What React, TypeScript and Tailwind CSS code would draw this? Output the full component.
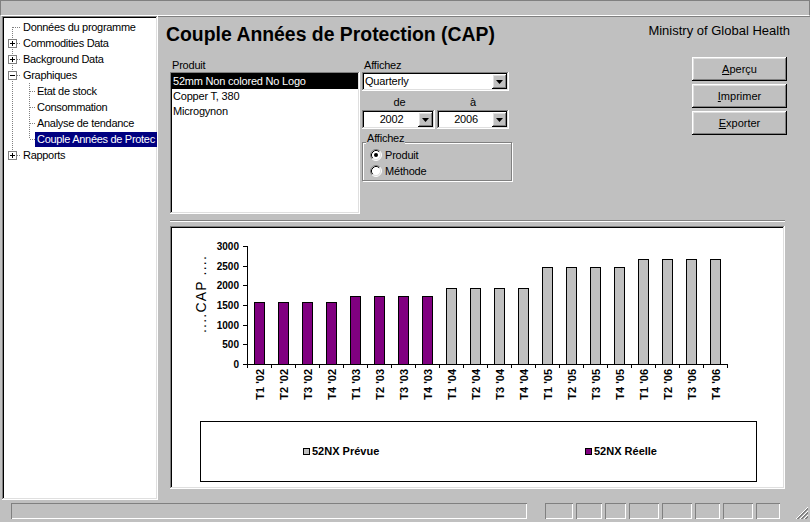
import React from 'react';

const sunken =
  'shadow-[inset_-1px_-1px_#ffffff,inset_1px_1px_#808080,inset_-2px_-2px_#dfdfdf,inset_2px_2px_#000000]';
const raised =
  'shadow-[inset_-1px_-1px_#000000,inset_1px_1px_#ffffff,inset_-2px_-2px_#808080,inset_2px_2px_#dfdfdf]';
const thinSunken = 'shadow-[inset_1px_1px_#808080,inset_-1px_-1px_#ffffff]';

type TreeItem = {
  label: string;
  level: 0 | 1;
  box?: '+' | '-';
  first?: boolean;
  last?: boolean;
  lastChild?: boolean;
  selected?: boolean;
};

const tree: TreeItem[] = [
  { label: 'Données du programme', level: 0, first: true },
  { label: 'Commodities Data', level: 0, box: '+' },
  { label: 'Background Data', level: 0, box: '+' },
  { label: 'Graphiques', level: 0, box: '-' },
  { label: 'Etat de stock', level: 1 },
  { label: 'Consommation', level: 1 },
  { label: 'Analyse de tendance', level: 1 },
  { label: 'Couple Années de Protec', level: 1, lastChild: true, selected: true },
  { label: 'Rapports', level: 0, box: '+', last: true },
];

const dot = { stroke: '#808080', strokeWidth: 1, strokeDasharray: '1 1' };

const Connector = ({ item }: { item: TreeItem }) => {
  if (item.level === 0) {
    return (
      <svg width={17} height={16} className="shrink-0">
        <line x1={8.5} y1={item.first ? 8 : 0} x2={8.5} y2={item.last ? 8 : 16} {...dot} />
        <line x1={9} y1={8.5} x2={17} y2={8.5} {...dot} />
        {item.box && (
          <g>
            <rect x={4.5} y={4.5} width={8} height={8} fill="#fff" stroke="#808080" />
            <line x1={6} y1={8.5} x2={11} y2={8.5} stroke="#000" />
            {item.box === '+' && <line x1={8.5} y1={6} x2={8.5} y2={11} stroke="#000" />}
          </g>
        )}
      </svg>
    );
  }
  return (
    <svg width={31} height={16} className="shrink-0">
      <line x1={8.5} y1={0} x2={8.5} y2={16} {...dot} />
      <line x1={25.5} y1={0} x2={25.5} y2={item.lastChild ? 8 : 16} {...dot} />
      <line x1={26} y1={8.5} x2={31} y2={8.5} {...dot} />
    </svg>
  );
};

const Arrow = () => (
  <div className={`w-[15px] h-[15px] mr-[2px] bg-[#c0c0c0] flex items-center justify-center shrink-0 ${raised}`}>
    <svg width={7} height={4}>
      <path d="M0 0h7l-3.5 4z" fill="#000" />
    </svg>
  </div>
);

const Combo = ({ value, width, center }: { value: string; width: string; center?: boolean }) => (
  <div className={`h-[19px] bg-white flex items-center ${width} ${sunken}`}>
    <span className={`flex-1 pl-[3px] leading-[13px] ${center ? 'text-center' : ''}`}>{value}</span>
    <Arrow />
  </div>
);

const Radio = ({ checked }: { checked?: boolean }) => (
  <svg width={12} height={12} className="shrink-0">
    <circle cx={6} cy={6} r={5} fill="#fff" />
    <path d="M2.11 9.89A5.5 5.5 0 0 1 9.89 2.11" fill="none" stroke="#808080" />
    <path d="M2.82 9.18A4.5 4.5 0 0 1 9.18 2.82" fill="none" stroke="#000" />
    <path d="M9.89 2.11A5.5 5.5 0 0 1 2.11 9.89" fill="none" stroke="#fff" />
    <path d="M9.18 2.82A4.5 4.5 0 0 1 2.82 9.18" fill="none" stroke="#dfdfdf" />
    {checked && <circle cx={6} cy={6} r={2} fill="#000" />}
  </svg>
);

const Button = ({ first, rest }: { first: string; rest: string }) => (
  <div className={`h-[24px] bg-[#c0c0c0] flex items-center justify-center ${raised}`}>
    <span>
      <span className="underline">{first}</span>
      {rest}
    </span>
  </div>
);

const values = [
  1580, 1580, 1580, 1580, 1730, 1730, 1730, 1730, 1920, 1920, 1920, 1920, 2470, 2470, 2470, 2470, 2680,
  2680, 2680, 2680,
];
const yPix = (v: number) => 136 - (v * 118) / 3000;
const chartFont = 'Liberation Sans, Arial, sans-serif';

const Chart = () => (
  <svg width={611} height={193} className="block">
    <text
      transform="translate(29,66) rotate(-90)"
      textAnchor="middle"
      dominantBaseline="central"
      fontSize={14}
      fontFamily={chartFont}
      letterSpacing={1.2}
    >
      ....CAP ....
    </text>
    {[0, 500, 1000, 1500, 2000, 2500, 3000].map((v) => (
      <g key={v}>
        <line x1={71} y1={Math.round(yPix(v)) + 0.5} x2={75} y2={Math.round(yPix(v)) + 0.5} stroke="#000" />
        <text
          x={67}
          y={Math.round(yPix(v)) + 0.5}
          textAnchor="end"
          dominantBaseline="central"
          fontSize={10}
          fontWeight="bold"
          fontFamily={chartFont}
        >
          {v}
        </text>
      </g>
    ))}
    {values.map((v, i) => {
      const top = Math.round(yPix(v)) + 0.5;
      return (
        <rect
          key={i}
          x={75 + i * 24 + 7.5}
          y={top}
          width={10}
          height={136.5 - top}
          fill={i < 8 ? '#800080' : '#c0c0c0'}
          stroke="#000"
        />
      );
    })}
    <line x1={75.5} y1={18} x2={75.5} y2={137} stroke="#000" />
    <line x1={75} y1={136.5} x2={556} y2={136.5} stroke="#000" />
    {Array.from({ length: 21 }).map((_, i) => (
      <line key={i} x1={75.5 + i * 24} y1={136} x2={75.5 + i * 24} y2={140} stroke="#000" />
    ))}
    {values.map((_, i) => (
      <text
        key={i}
        transform={`translate(${75 + i * 24 + 12.5},141) rotate(-90)`}
        textAnchor="end"
        dominantBaseline="central"
        fontSize={11}
        fontWeight="bold"
        fontFamily={chartFont}
      >
        {`T${(i % 4) + 1} '0${2 + Math.floor(i / 4)}`}
      </text>
    ))}
  </svg>
);

export default function App() {
  return (
    <div className="w-[810px] h-[522px] bg-[#c0c0c0] flex flex-col text-[11px] text-black font-['Liberation_Sans',Arial,sans-serif] overflow-hidden">
      <div className="h-[16px] border-t border-l border-r border-[#808080] border-b border-b-white shrink-0" />

      <div className="h-[484px] flex shrink-0">
        <div className={`ml-[2px] w-[156px] bg-white pt-[3px] pl-[2px] pr-[1px] overflow-hidden ${sunken}`}>
          {tree.map((item) => (
            <div key={item.label} className="h-[16px] flex items-center whitespace-nowrap">
              <Connector item={item} />
              <span
                className={`px-[2px] leading-[15px] tracking-[-0.3px] ${
                  item.selected ? 'flex-1 bg-[#000080] text-white' : ''
                }`}
              >
                {item.label}
              </span>
            </div>
          ))}
        </div>

        <div className="flex-1 border-t border-[#808080] flex flex-col">
          <div className="flex items-start justify-between pl-[8px] pr-[20px] pt-[6px]">
            <div className="text-[19.4px] leading-[22px] font-bold">Couple Années de Protection (CAP)</div>
            <div className="text-[13px] leading-[16px]">Ministry of Global Health</div>
          </div>

          <div className="mt-[12px] pl-[12px] flex items-start tracking-[-0.2px]">
            <div className="w-[190px] mt-[2px]">
              <div className="h-[13px] leading-[13px] pl-[2px]">Produit</div>
              <div className={`h-[142px] bg-white pt-[2px] px-[2px] ${sunken}`}>
                <div className="h-[15px] leading-[15px] pl-[1px] bg-black text-white">52mm Non colored No Logo</div>
                <div className="h-[15px] leading-[15px] pl-[1px]">Copper T, 380</div>
                <div className="h-[15px] leading-[15px] pl-[1px]">Microgynon</div>
              </div>
            </div>

            <div className="ml-[2px] w-[150px] mt-[2px]">
              <div className="h-[13px] leading-[13px] pl-[2px]">Affichez</div>
              <Combo value="Quarterly" width="w-[147px]" />
              <div className="mt-[5px] h-[13px] leading-[13px] flex">
                <div className="w-[75px] text-center">de</div>
                <div className="w-[72px] text-center">à</div>
              </div>
              <div className="mt-[1px] flex gap-[2px]">
                <Combo value="2002" width="w-[73px]" center />
                <Combo value="2006" width="w-[72px]" center />
              </div>
              <div className="relative mt-[13px] h-[39px] w-[150px] border border-[#808080] shadow-[inset_1px_1px_#ffffff,1px_1px_#ffffff] pt-[4px] pl-[7px]">
                <span className="absolute top-[-11px] left-[3px] px-[1px] bg-[#c0c0c0] leading-[13px]">Affichez</span>
                <div className="h-[16px] flex items-center gap-[3px]">
                  <Radio checked />
                  <span>Produit</span>
                </div>
                <div className="h-[16px] flex items-center gap-[3px]">
                  <Radio />
                  <span>Méthode</span>
                </div>
              </div>
            </div>

            <div className="ml-auto mr-[23px] w-[95px] flex flex-col gap-[3px] tracking-normal">
              <Button first="A" rest="perçu" />
              <Button first="I" rest="mprimer" />
              <Button first="E" rest="xporter" />
            </div>
          </div>

          <div className="mt-[6px] ml-[12px] w-[615px] h-[2px] border-t border-[#808080] border-b border-b-white" />

          <div className={`mt-[4px] ml-[12px] w-[615px] h-[263px] bg-white p-[2px] ${sunken}`}>
            <Chart />
            <div className="ml-[28px] w-[557px] h-[61px] border border-black flex items-center font-bold">
              <div className="ml-[102px] w-[282px] flex items-center gap-[2px]">
                <span className="w-[7px] h-[7px] border border-black bg-[#c0c0c0]" />
                <span>52NX Prévue</span>
              </div>
              <div className="flex items-center gap-[2px]">
                <span className="w-[7px] h-[7px] border border-black bg-[#800080]" />
                <span>52NX Réelle</span>
              </div>
            </div>
          </div>
        </div>
      </div>

      <div className="mt-[3px] h-[16px] flex shrink-0">
        <div className={`ml-[11px] w-[516px] ${thinSunken}`} />
        <div className="ml-[18px] flex gap-[3px]">
          {[28, 26, 21, 30, 30, 25, 30, 24].map((w, i) => (
            <div key={i} className={thinSunken} style={{ width: w }} />
          ))}
        </div>
        <svg width={13} height={13} className="ml-auto mr-[2px] mt-[3px]">
          {[0, 4, 8].map((o) => (
            <g key={o}>
              <line x1={13} y1={o + 1} x2={o + 1} y2={13} stroke="#ffffff" />
              <line x1={13} y1={o + 2} x2={o + 2} y2={13} stroke="#808080" />
              <line x1={13} y1={o + 3} x2={o + 3} y2={13} stroke="#808080" />
            </g>
          ))}
        </svg>
      </div>
    </div>
  );
}
